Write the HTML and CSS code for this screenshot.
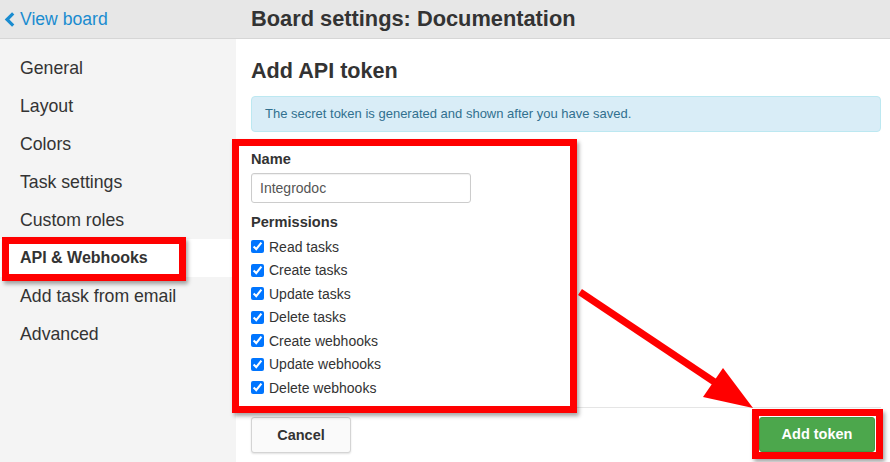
FILE: index.html
```html
<!DOCTYPE html>
<html lang="en">
<head>
<meta charset="utf-8">
<title>Board settings: Documentation</title>
<link rel="stylesheet" href="styles.css">
</head>
<body>
<div class="page">
  <header class="topbar">
    <a class="back" href="#">
      <svg class="chev" width="11" height="15" viewBox="0 0 11 15"><path d="M9.2 1.3 L3 7.5 L9.2 13.7" fill="none" stroke="#1a8cd0" stroke-width="3.2"/></svg>
      View board
    </a>
    <div class="title">Board settings: Documentation</div>
  </header>
  <div class="body">
    <nav class="sidebar">
      <a class="nav-item" href="#">General</a>
      <a class="nav-item" href="#">Layout</a>
      <a class="nav-item" href="#">Colors</a>
      <a class="nav-item" href="#">Task settings</a>
      <a class="nav-item" href="#">Custom roles</a>
      <a class="nav-item active" href="#">API &amp; Webhooks</a>
      <a class="nav-item" href="#">Add task from email</a>
      <a class="nav-item" href="#">Advanced</a>
    </nav>
    <main class="main">
      <h1 class="heading">Add API token</h1>
      <div class="alert">The secret token is generated and shown after you have saved.</div>
      <label class="label name-label" for="name">Name</label>
      <input id="name" class="input" type="text" value="Integrodoc">
      <div class="label perm-label">Permissions</div>
      <ul class="perms">
        <li><label><input type="checkbox" checked> Read tasks</label></li>
        <li><label><input type="checkbox" checked> Create tasks</label></li>
        <li><label><input type="checkbox" checked> Update tasks</label></li>
        <li><label><input type="checkbox" checked> Delete tasks</label></li>
        <li><label><input type="checkbox" checked> Create webhooks</label></li>
        <li><label><input type="checkbox" checked> Update webhooks</label></li>
        <li><label><input type="checkbox" checked> Delete webhooks</label></li>
      </ul>
      <div class="footer">
        <button class="btn btn-default" type="button">Cancel</button>
        <button class="btn btn-success" type="button">Add token</button>
      </div>
    </main>
  </div>

  <div class="mark mark-nav"></div>
  <div class="mark mark-form"></div>
  <div class="mark mark-btn"></div>
  <svg class="arrow" width="890" height="462" viewBox="0 0 890 462">
    <line x1="580" y1="292" x2="716" y2="383" stroke="#f00" stroke-width="7"/>
    <polygon points="753,408 723,368 703,397" fill="#f00"/>
  </svg>
</div>
</body>
</html>
```
FILE: styles.css
```css
* { box-sizing: border-box; }
html, body { margin: 0; padding: 0; }
body {
  font-family: "Liberation Sans", Arial, sans-serif;
  color: #333;
  background: #fff;
  width: 890px;
  height: 462px;
  overflow: hidden;
}
.page {
  position: relative;
  width: 890px;
  height: 462px;
  display: flex;
  flex-direction: column;
}
.topbar {
  height: 39px;
  flex: none;
  background: #e7e7e7;
  border-bottom: 1px solid #d6d6d6;
  display: flex;
  align-items: center;
}
.back {
  width: 236px;
  padding-left: 4px;
  display: flex;
  align-items: center;
  gap: 5px;
  color: #1a8cd0;
  text-decoration: none;
  font-size: 17.6px;
}
.chev { display: block; }
.title {
  padding-left: 15px;
  font-size: 21.8px;
  font-weight: bold;
  color: #333;
}
.body {
  flex: 1;
  display: flex;
  min-height: 0;
}
.sidebar {
  width: 236px;
  flex: none;
  background: #f4f4f4;
  padding-top: 10px;
  display: flex;
  flex-direction: column;
}
.nav-item {
  height: 38px;
  display: flex;
  align-items: center;
  padding-left: 20px;
  font-size: 17.7px;
  color: #333;
  text-decoration: none;
}
.nav-item.active {
  background: #fff;
  font-weight: bold;
  font-size: 16px;
}
.main {
  flex: 1;
  padding: 0 9px 0 15px;
  display: flex;
  flex-direction: column;
  align-items: flex-start;
}
.heading {
  margin: 19px 0 12px;
  font-size: 21.6px;
  line-height: 26px;
  font-weight: bold;
  color: #333;
}
.alert {
  align-self: stretch;
  height: 36px;
  background: #d9edf7;
  border: 1px solid #bce8f1;
  border-radius: 4px;
  color: #31708f;
  font-size: 13px;
  line-height: 34px;
  padding: 0 13px;
}
.label {
  font-weight: bold;
  font-size: 14.6px;
  line-height: 18px;
  color: #333;
}
.name-label { margin-top: 18px; }
.input {
  margin-top: 5px;
  width: 220px;
  height: 30px;
  border: 1px solid #ccc;
  border-radius: 3px;
  padding: 0 8px;
  font-family: "Liberation Sans", Arial, sans-serif;
  font-size: 14px;
  color: #555;
  box-shadow: inset 0 1px 1px rgba(0,0,0,.06);
}
.perm-label { margin-top: 10px; }
.perms {
  list-style: none;
  margin: 4px 0 0;
  padding: 0;
}
.perms li {
  height: 23.5px;
  display: flex;
  align-items: center;
  font-size: 14px;
  color: #333;
}
.perms label { display: flex; align-items: center; }
.perms input {
  margin: 0 5px 0 0;
  width: 13px;
  height: 13px;
}
.footer {
  align-self: stretch;
  margin-top: 7px;
  border-top: 1px solid #e5e5e5;
  padding: 9px 6px 0 0;
  display: flex;
  justify-content: space-between;
  align-items: flex-start;
}
.btn {
  font-family: "Liberation Sans", Arial, sans-serif;
  font-weight: bold;
  font-size: 14.5px;
  border-radius: 3px;
}
.btn-default {
  width: 100px;
  height: 36px;
  background: #fafafa;
  border: 1px solid #d4d4d4;
  color: #333;
  box-shadow: 0 1px 2px rgba(0,0,0,.12);
}
.btn-success {
  width: 116px;
  height: 35px;
  background: #4ca74c;
  border: 1px solid #439a43;
  color: #fff;
}
.mark {
  position: absolute;
  border: 7px solid #f00;
  box-shadow: 2px 3px 4px rgba(0,0,0,.35);
  pointer-events: none;
}
.mark-nav { left: 2px; top: 237px; width: 184px; height: 44px; }
.mark-form { left: 232px; top: 139px; width: 345px; height: 274px; }
.mark-btn { left: 752px; top: 409px; width: 131px; height: 50px; }
.arrow {
  position: absolute;
  left: 0;
  top: 0;
  pointer-events: none;
}
```
